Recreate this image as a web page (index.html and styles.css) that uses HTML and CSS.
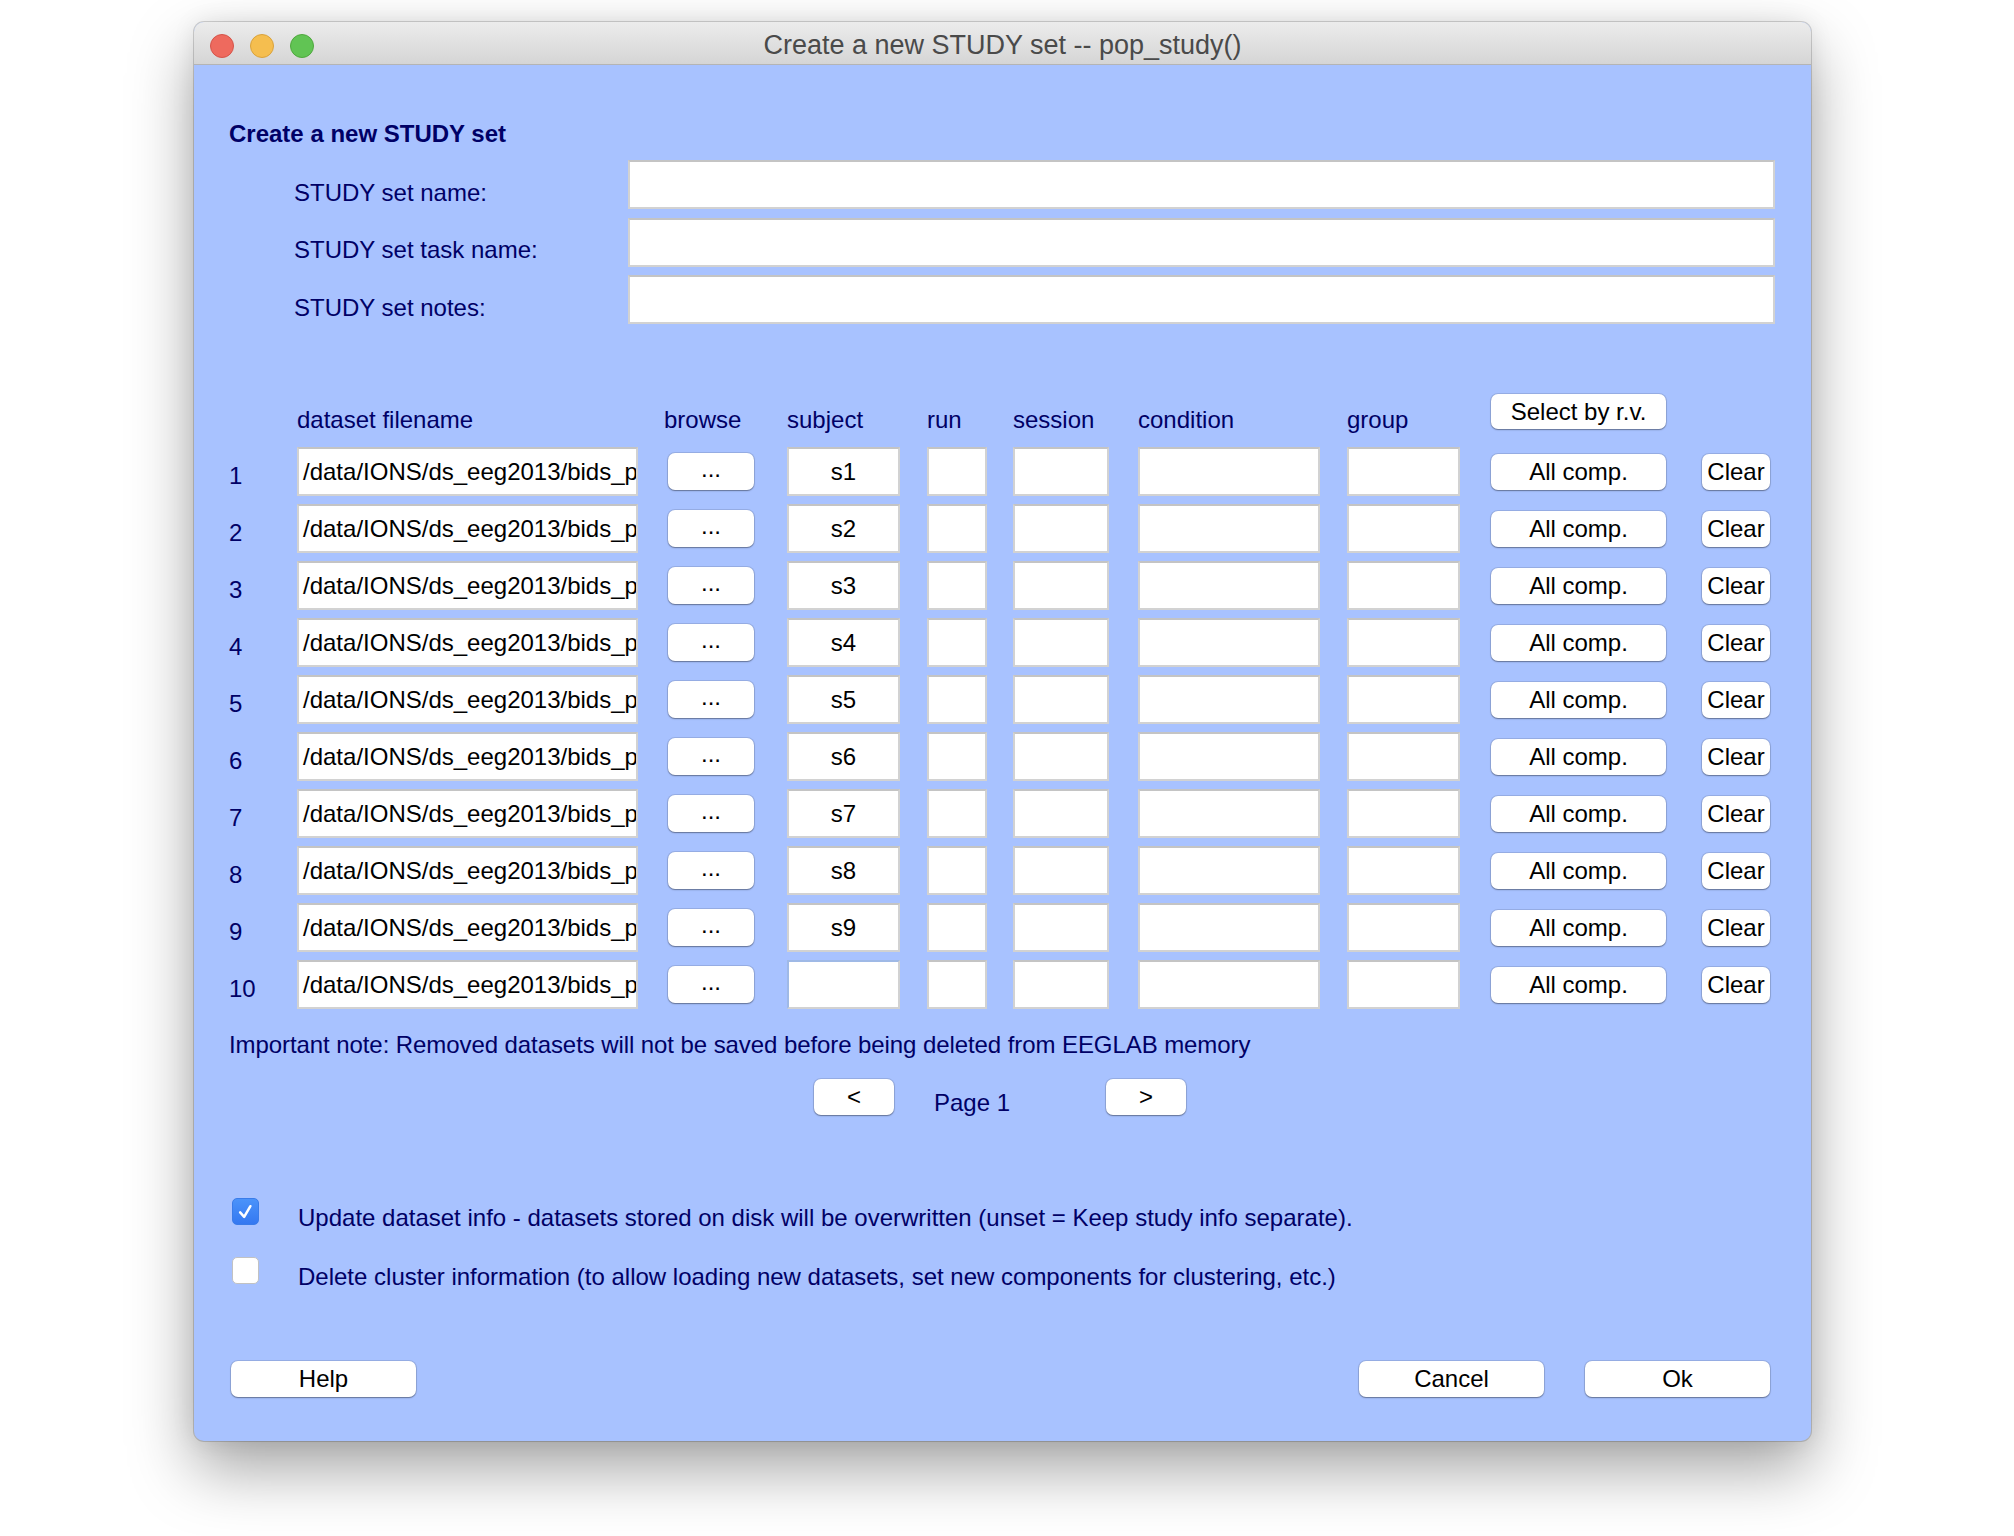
FILE: index.html
```html
<!DOCTYPE html>
<html>
<head>
<meta charset="utf-8">
<title>Create a new STUDY set -- pop_study()</title>
<link rel="stylesheet" href="styles.css">
</head>
<body>
<div class="window">
  <div class="titlebar">
    <div class="lights">
      <span class="light red"></span>
      <span class="light yellow"></span>
      <span class="light green"></span>
    </div>
    <div class="title">Create a new STUDY set -- pop_study()</div>
    <div></div>
  </div>
  <div class="content">
    <div class="heading">Create a new STUDY set</div>
    <div class="fields">
      <div class="flabel">STUDY set name:</div><div class="input"></div>
      <div class="flabel">STUDY set task name:</div><div class="input"></div>
      <div class="flabel">STUDY set notes:</div><div class="input"></div>
    </div>

    <div class="table">
      <div></div>
      <div class="th">dataset filename</div>
      <div class="th th-browse">browse</div>
      <div class="th">subject</div>
      <div class="th">run</div>
      <div class="th">session</div>
      <div class="th">condition</div>
      <div class="th">group</div>
      <div class="btn btn-wide btn-select">Select by r.v.</div>
      <div></div>

      <div class="num">1</div><div class="input fname"><span>/data/IONS/ds_eeg2013/bids_p</span></div><div class="btn btn-browse">...</div><div class="input subj">s1</div><div class="input run"></div><div class="input sess"></div><div class="input cond"></div><div class="input grp"></div><div class="btn btn-wide">All comp.</div><div class="btn btn-clear">Clear</div>
      <div class="num">2</div><div class="input fname"><span>/data/IONS/ds_eeg2013/bids_p</span></div><div class="btn btn-browse">...</div><div class="input subj">s2</div><div class="input run"></div><div class="input sess"></div><div class="input cond"></div><div class="input grp"></div><div class="btn btn-wide">All comp.</div><div class="btn btn-clear">Clear</div>
      <div class="num">3</div><div class="input fname"><span>/data/IONS/ds_eeg2013/bids_p</span></div><div class="btn btn-browse">...</div><div class="input subj">s3</div><div class="input run"></div><div class="input sess"></div><div class="input cond"></div><div class="input grp"></div><div class="btn btn-wide">All comp.</div><div class="btn btn-clear">Clear</div>
      <div class="num">4</div><div class="input fname"><span>/data/IONS/ds_eeg2013/bids_p</span></div><div class="btn btn-browse">...</div><div class="input subj">s4</div><div class="input run"></div><div class="input sess"></div><div class="input cond"></div><div class="input grp"></div><div class="btn btn-wide">All comp.</div><div class="btn btn-clear">Clear</div>
      <div class="num">5</div><div class="input fname"><span>/data/IONS/ds_eeg2013/bids_p</span></div><div class="btn btn-browse">...</div><div class="input subj">s5</div><div class="input run"></div><div class="input sess"></div><div class="input cond"></div><div class="input grp"></div><div class="btn btn-wide">All comp.</div><div class="btn btn-clear">Clear</div>
      <div class="num">6</div><div class="input fname"><span>/data/IONS/ds_eeg2013/bids_p</span></div><div class="btn btn-browse">...</div><div class="input subj">s6</div><div class="input run"></div><div class="input sess"></div><div class="input cond"></div><div class="input grp"></div><div class="btn btn-wide">All comp.</div><div class="btn btn-clear">Clear</div>
      <div class="num">7</div><div class="input fname"><span>/data/IONS/ds_eeg2013/bids_p</span></div><div class="btn btn-browse">...</div><div class="input subj">s7</div><div class="input run"></div><div class="input sess"></div><div class="input cond"></div><div class="input grp"></div><div class="btn btn-wide">All comp.</div><div class="btn btn-clear">Clear</div>
      <div class="num">8</div><div class="input fname"><span>/data/IONS/ds_eeg2013/bids_p</span></div><div class="btn btn-browse">...</div><div class="input subj">s8</div><div class="input run"></div><div class="input sess"></div><div class="input cond"></div><div class="input grp"></div><div class="btn btn-wide">All comp.</div><div class="btn btn-clear">Clear</div>
      <div class="num">9</div><div class="input fname"><span>/data/IONS/ds_eeg2013/bids_p</span></div><div class="btn btn-browse">...</div><div class="input subj">s9</div><div class="input run"></div><div class="input sess"></div><div class="input cond"></div><div class="input grp"></div><div class="btn btn-wide">All comp.</div><div class="btn btn-clear">Clear</div>
      <div class="num">10</div><div class="input fname"><span>/data/IONS/ds_eeg2013/bids_p</span></div><div class="btn btn-browse">...</div><div class="input subj focus"></div><div class="input run"></div><div class="input sess"></div><div class="input cond"></div><div class="input grp"></div><div class="btn btn-wide">All comp.</div><div class="btn btn-clear">Clear</div>
    </div>

    <div class="note">Important note: Removed datasets will not be saved before being deleted from EEGLAB memory</div>

    <div class="pager">
      <div class="btn btn-page">&lt;</div>
      <div class="pagelabel">Page 1</div>
      <div class="btn btn-page">&gt;</div>
    </div>

    <div class="checks">
      <div class="checkrow">
        <span class="cbox checked"><svg viewBox="0 0 28 28" width="28" height="28"><polyline points="8,14.5 12.5,19.5 19.5,7.5" fill="none" stroke="#fff" stroke-width="2.8" stroke-linecap="round" stroke-linejoin="round"/></svg></span>
        <span class="ctext">Update dataset info - datasets stored on disk will be overwritten (unset = Keep study info separate).</span>
      </div>
      <div class="checkrow">
        <span class="cbox"></span>
        <span class="ctext">Delete cluster information (to allow loading new datasets, set new components for clustering, etc.)</span>
      </div>
    </div>

    <div class="footer">
      <div class="btn btn-foot btn-help">Help</div>
      <div class="btn btn-foot btn-cancel">Cancel</div>
      <div class="btn btn-foot btn-ok">Ok</div>
    </div>
  </div>
</div>
</body>
</html>
```

FILE: styles.css
```css
* { box-sizing: border-box; }

body {
  margin: 0;
  width: 2014px;
  height: 1536px;
  overflow: hidden;
  background: #ffffff;
  font-family: "Liberation Sans", Arial, Helvetica, sans-serif;
}

.window {
  margin: 22px 0 0 194px;
  width: 1617px;
  height: 1419px;
  border-radius: 10px;
  background: #a8c2ff;
  box-shadow: 0 0 0 1px rgba(0, 0, 0, 0.16), 0 28px 64px rgba(0, 0, 0, 0.36), 0 0 24px rgba(0, 0, 0, 0.08);
  overflow: hidden;
  display: flex;
  flex-direction: column;
}

.titlebar {
  height: 43px;
  flex: none;
  background: linear-gradient(#ececec, #d5d5d5);
  border-bottom: 1px solid #b4b4b4;
  display: grid;
  grid-template-columns: 1fr auto 1fr;
  align-items: center;
}

.lights {
  display: flex;
  gap: 16px;
  padding-left: 16px;
  padding-top: 2px;
}

.light {
  width: 24px;
  height: 24px;
  border-radius: 50%;
  display: block;
}
.red { background: #ee6a5e; border: 1px solid #d5544a; }
.yellow { background: #f5be4f; border: 1px solid #d9a23c; }
.green { background: #61c454; border: 1px solid #4fa83e; }

.title {
  font-size: 27px;
  color: #4a4a4a;
  line-height: 43px;
  padding-top: 2px;
  white-space: nowrap;
}

.content {
  flex: 1;
  padding: 54px 36px 0 35px;
  color: #000066;
  font-size: 24px;
}

.heading {
  font-weight: bold;
  font-size: 24px;
  line-height: 30px;
}

.fields {
  display: grid;
  grid-template-columns: 399px 1fr;
  row-gap: 8.5px;
  margin-top: 11px;
}

.flabel {
  height: 49px;
  padding-left: 65px;
  padding-top: 16px;
  display: flex;
  align-items: center;
  white-space: nowrap;
}

.input {
  background: #ffffff;
  border: 2px solid #d2d2d2;
  border-top-color: #c4c4c4;
  height: 49px;
  color: #000;
}

.table {
  display: grid;
  grid-template-columns: 68px 371px 119px 140px 86px 125px 209px 144px 211px 68px;
  grid-template-rows: 45px;
  grid-auto-rows: 49px;
  row-gap: 8px;
  margin-top: 70px;
}

.th {
  padding-top: 11px;
  line-height: 30px;
  white-space: nowrap;
}
.th-browse { margin-left: -4px; }

.num {
  display: flex;
  align-items: center;
  padding-top: 8px;
}

.fname {
  width: 341px;
  overflow: hidden;
  white-space: nowrap;
  display: flex;
  align-items: center;
  padding-left: 4px;
}

.subj {
  width: 113px;
  display: flex;
  align-items: center;
  justify-content: center;
}
.subj.focus { border-color: #9fb9e6; border-right-color: #d2d2d2; border-bottom-color: #d2d2d2; }
.run { width: 60px; }
.sess { width: 96px; }
.cond { width: 182px; }
.grp { width: 113px; }

.btn {
  background: #ffffff;
  border-radius: 7px;
  box-shadow: 0 0 0 1px rgba(0, 0, 0, 0.1), 0 1px 1.5px rgba(0, 0, 0, 0.35);
  color: #000;
  display: flex;
  align-items: center;
  justify-content: center;
  white-space: nowrap;
}

.btn-browse {
  width: 86px;
  height: 37px;
  align-self: center;
  font-size: 24px;
  padding-bottom: 6px;
}

.btn-wide {
  width: 175px;
  height: 36px;
  align-self: center;
}
.btn-select {
  align-self: start;
  height: 35px;
}

.btn-clear {
  width: 68px;
  height: 36px;
  align-self: center;
}

.note {
  margin-top: 21px;
  line-height: 30px;
  white-space: nowrap;
  letter-spacing: -0.08px;
}

.pager {
  margin-top: 19px;
  display: flex;
  align-items: flex-start;
  padding-left: 585px;
  height: 36px;
}

.btn-page {
  width: 80px;
  height: 36px;
}

.pagelabel {
  width: 212px;
  padding-left: 40px;
  padding-top: 6px;
  line-height: 36px;
}

.checks {
  margin-top: 83px;
}

.checkrow {
  display: flex;
  align-items: flex-start;
  height: 35px;
}
.checkrow + .checkrow { margin-top: 24px; }

.cbox {
  width: 27px;
  height: 27px;
  margin-left: 3px;
  border-radius: 5px;
  background: #ffffff;
  border: 1px solid #c2c2c2;
  flex: none;
  display: flex;
  align-items: center;
  justify-content: center;
}
.cbox.checked {
  background: linear-gradient(#4b93fa, #3478f1);
  border-color: #3a7ce9;
}
.cbox svg { width: 26px; height: 26px; }

.ctext {
  margin-left: 39px;
  line-height: 30px;
  padding-top: 5px;
  white-space: nowrap;
}

.footer {
  margin-top: 69px;
  display: flex;
}

.btn-foot {
  width: 185px;
  height: 36px;
}
.btn-help { margin-left: 2px; }
.btn-cancel { margin-left: auto; }
.btn-ok { margin-left: 41px; margin-right: 5px; }
```
